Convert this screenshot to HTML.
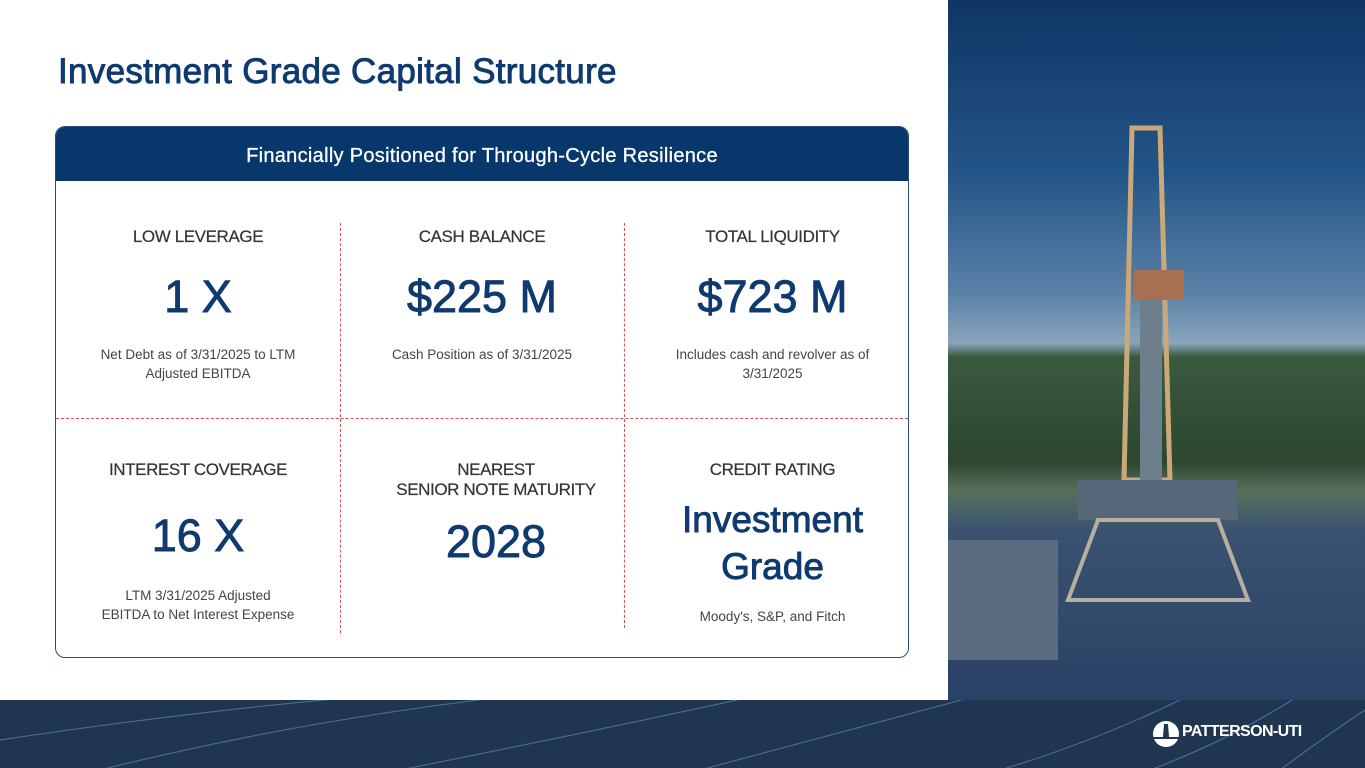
<!DOCTYPE html><html><head><style>
*{margin:0;padding:0;box-sizing:border-box}
body{width:1365px;height:768px;position:relative;overflow:hidden;background:#fff;font-family:"Liberation Sans",sans-serif}
h1{position:absolute;left:58px;top:52px;font-size:35px;font-weight:400;color:#0e3a70;letter-spacing:0.3px;-webkit-text-stroke:0.9px #0e3a70}
.card{position:absolute;left:55px;top:126px;width:854px;height:532px;border:1px solid #2a4f7e;border-radius:10px;overflow:hidden}
.hd{height:54px;background:#07376b;color:#fff;text-align:center;font-size:20px;line-height:58px;letter-spacing:.3px;-webkit-text-stroke:0.3px #fff}
.c{position:absolute;text-align:center;width:284px;color:#333}
.l{font-size:17px;color:#333;letter-spacing:-.4px;-webkit-text-stroke:0.2px #333}
.v{font-size:45px;color:#0e3a70;margin-top:24px;line-height:52px;-webkit-text-stroke:0.9px #0e3a70}
.d{font-size:13.5px;color:#444;line-height:19px;margin-top:22px}
.vl{position:absolute;border-left:1px dashed #e05050}
.hl{position:absolute;border-top:1px dashed #e05050;left:0;width:852px;top:291px}
.foot{position:absolute;left:0;top:700px;width:1365px;height:68px;background:#1f3550}
.ph{position:absolute;left:948px;top:0;width:417px;height:700px;background:linear-gradient(#0f3566 0%,#245588 25%,#5b82a8 42%,#8aa4ba 49%,#3a5a3e 51%,#2c4630 66%,#56705c 70%,#3a5270 76%,#2a4166 100%)}
</style></head><body>
<h1>Investment Grade Capital Structure</h1>
<div class="card"><div class="hd">Financially Positioned for Through-Cycle Resilience</div>
<div class="vl" style="left:284px;top:96px;height:410px"></div>
<div class="vl" style="left:568px;top:96px;height:405px"></div>
<div class="hl"></div>
<div class="c" style="left:0;top:100px"><div class="l">LOW LEVERAGE</div><div class="v">1 X</div><div class="d">Net Debt as of 3/31/2025 to LTM<br>Adjusted EBITDA</div></div>
<div class="c" style="left:284px;top:100px"><div class="l">CASH BALANCE</div><div class="v">$225 M</div><div class="d">Cash Position as of 3/31/2025</div></div>
<div class="c" style="left:568px;top:100px;width:297px"><div class="l">TOTAL LIQUIDITY</div><div class="v">$723 M</div><div class="d">Includes cash and revolver as of<br>3/31/2025</div></div>
<div class="c" style="left:0;top:333px"><div class="l">INTEREST COVERAGE</div><div class="v" style="margin-top:30px">16 X</div><div class="d" style="margin-top:24px">LTM 3/31/2025 Adjusted<br>EBITDA to Net Interest Expense</div></div>
<div class="c" style="left:298px;top:333px"><div class="l">NEAREST<br>SENIOR NOTE MATURITY</div><div class="v" style="margin-top:16px">2028</div></div>
<div class="c" style="left:568px;top:333px;width:297px"><div class="l">CREDIT RATING</div><div class="v" style="font-size:37px;margin-top:16px;line-height:47px">Investment<br>Grade</div><div class="d" style="margin-top:17px">Moody's, S&amp;P, and Fitch</div></div>
</div>
<div class="ph">
<svg width="417" height="700" style="position:absolute;left:0;top:0">
<polygon points="184,128 212,128 222,480 176,480" fill="none" stroke="#c9a97a" stroke-width="5"/>
<rect x="186" y="270" width="50" height="30" fill="#a87050"/>
<rect x="192" y="300" width="22" height="200" fill="#6d7e8c"/>
<rect x="130" y="480" width="160" height="40" fill="#56677a"/>
<polygon points="150,520 270,520 300,600 120,600" fill="none" stroke="#b7b0a0" stroke-width="4"/>
<rect x="0" y="540" width="110" height="120" fill="#5a6c80"/>
</svg></div>
<div class="foot">
<svg width="1365" height="68" style="position:absolute;left:0;top:0" fill="none" stroke="#4a6a90" stroke-width="1.2">
<path d="M0 40 Q200 10 380 -5"/><path d="M100 70 Q300 20 520 -5"/><path d="M400 70 Q600 30 760 -5"/><path d="M700 70 Q850 30 980 -5"/><path d="M1000 70 Q1100 40 1190 -5"/><path d="M1150 70 Q1230 40 1300 -5"/><path d="M1280 70 Q1320 40 1365 10"/></svg>
<svg width="26" height="26" style="position:absolute;left:1153px;top:21px"><circle cx="13" cy="13" r="13" fill="#fff"/><path d="M11 3h4l1 13h-6z" fill="#1f3550"/><path d="M0 17h26" stroke="#1f3550" stroke-width="2"/></svg>
<div style="position:absolute;left:1182px;top:23px;color:#fff;font-weight:bold;font-size:16px;letter-spacing:-.6px">PATTERSON-UTI</div>
</div>
</body></html>
